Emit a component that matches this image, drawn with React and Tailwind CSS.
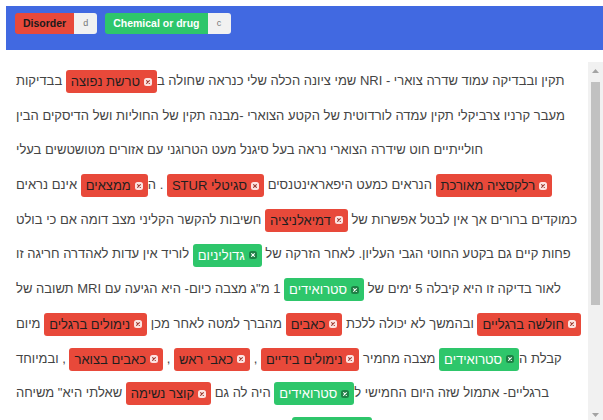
import React from "react";

const FONT = { fontFamily: '"Liberation Sans", Arial, "DejaVu Sans", sans-serif' };

function CloseDot({ green }) {
  return (
    <svg width="8" height="8" viewBox="0 0 8 8" className="shrink-0">
      <rect x="0" y="0" width="8" height="8" rx="2.5" fill={green ? "rgba(0,0,0,0.35)" : "rgba(255,255,255,0.85)"} />
      <path d="M2.6 2.6 L5.4 5.4 M5.4 2.6 L2.6 5.4" stroke={green ? "#ffffff" : "#9b3a30"} strokeWidth="1.1" strokeLinecap="round" />
    </svg>
  );
}

function Tag({ green, children }) {
  return (
    <span
      className={
        green
          ? "inline-flex items-center align-middle h-[23px] px-[5px] gap-[4px] rounded-[3px] bg-[#2ec66b] text-white leading-none"
          : "inline-flex items-center align-middle h-[23px] px-[5px] gap-[4px] rounded-[3px] bg-[#e8493a] text-[#1f1f1f] leading-none"
      }
    >
      <CloseDot green={green} />
      <span>{children}</span>
    </span>
  );
}

function Line({ children }) {
  return (
    <div dir="rtl" className="h-[34.7px] leading-[34.7px] whitespace-nowrap text-left">
      {children}
    </div>
  );
}

function LabelChip({ name, hotkey, green }) {
  return (
    <div className="flex h-[21px] rounded-[3px] overflow-hidden">
      <span
        className={
          green
            ? "flex items-center px-[8px] bg-[#2ec66b] text-white font-bold text-[10.5px]"
            : "flex items-center px-[8px] bg-[#e8493a] text-[#1a1a1a] font-bold text-[10.5px]"
        }
      >
        {name}
      </span>
      <span className="flex items-center justify-center w-[23px] bg-[#f1f1f1] text-[#777] text-[9px]">{hotkey}</span>
    </div>
  );
}

function Scrollbar() {
  return (
    <div className="w-[15px] shrink-0 bg-[#f1f1f1] flex flex-col">
      <div className="h-[17px] flex items-center justify-center">
        <svg width="7" height="4" viewBox="0 0 7 4">
          <path d="M0 4 L3.5 0 L7 4 Z" fill="#a3a3a3" />
        </svg>
      </div>
      <div className="mt-[3px] mx-[3px] h-[223px] bg-[#c1c1c1]" />
      <div className="flex-1" />
      <div className="h-[17px] flex items-center justify-center">
        <svg width="7" height="4" viewBox="0 0 7 4">
          <path d="M0 0 L3.5 4 L7 0 Z" fill="#a3a3a3" />
        </svg>
      </div>
    </div>
  );
}

export default function App() {
  return (
    <div className="w-[603px] h-[420px] overflow-hidden bg-white" style={FONT}>
      <div className="ml-[6px] mt-[6px] h-[44px] bg-[#4169e1] flex items-start pt-[7px] pl-[9px] gap-[8px]">
        <LabelChip name="Disorder" hotkey="d" />
        <LabelChip name="Chemical or drug" hotkey="c" green />
      </div>

      <div className="ml-[6px] mt-[12px] h-[361px] flex">
        <div className="flex-1 overflow-hidden pl-[10px] pt-[2px] text-[13px] text-[#444]">
          <Line>
            תקין ובבדיקה עמוד שדרה צוארי - NRI שמי ציונה הכלה שלי כנראה שחולה ב<Tag>טרשת נפוצה</Tag> בבדיקות
          </Line>
          <Line>מעבר קרניו צרביקלי תקין עמדה לורדוטית של הקטע הצוארי -מבנה תקין של החוליות ושל הדיסקים הבין</Line>
          <Line>חולייתיים חוט שידרה הצוארי נראה בעל סיגנל מעט הטרוגני עם אזורים מטושטשים בעלי</Line>
          <Line>
            <Tag>רלקסציה מאורכת</Tag> הנראים כמעט היפאראינטנסים <Tag>סגיטלי STUR</Tag> . ה<Tag>ממצאים</Tag> אינם נראים
          </Line>
          <Line>
            כמוקדים ברורים אך אין לבטל אפשרות של <Tag>דמיאלניציה</Tag> חשיבות להקשר הקליני מצב דומה אם כי בולט
          </Line>
          <Line>
            פחות קיים גם בקטע החוטי הגבי העליון. לאחר הזרקה של <Tag green>גדוליניום</Tag> לוריד אין עדות לאהדרה חריגה זו
          </Line>
          <Line>
            לאור בדיקה זו היא קיבלה 5 ימים של <Tag green>סטרואידים</Tag> 1 מ"ג מצבה כיום- היא הגיעה עם MRI תשובה של
          </Line>
          <Line>
            <Tag>חולשה ברגליים</Tag> ובהמשך לא יכולה ללכת <Tag>כאבים</Tag> מהברך למטה לאחר מכן <Tag>נימולים ברגלים</Tag> מיום
          </Line>
          <Line>
            קבלת ה<Tag green>סטרואידים</Tag> מצבה מחמיר <Tag>נימולים בידיים</Tag> , <Tag>כאבי ראש</Tag> , <Tag>כאבים בצואר</Tag> , ובמיוחד
          </Line>
          <Line>
            ברגליים- אתמול שזה היום החמישי ל<Tag green>סטרואידים</Tag> היה לה גם <Tag>קוצר נשימה</Tag> שאלתי היא" משיחה
          </Line>
          <Line>
            שהתחילה את ה<Tag green>סטרואידים</Tag> היא מרגישה ירידה בתחושה בכפות הידיים והרגליים
          </Line>
        </div>
        <Scrollbar />
      </div>
    </div>
  );
}
